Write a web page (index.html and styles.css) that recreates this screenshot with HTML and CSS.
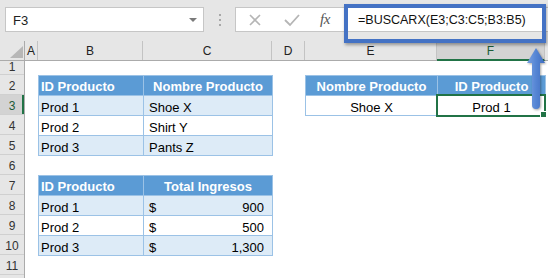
FILE: index.html
```html
<!DOCTYPE html>
<html>
<head>
<meta charset="utf-8">
<link rel="stylesheet" href="styles.css">
</head>
<body>
<div class="app">
  <div class="toolbar">
    <div class="namebox">
      <span class="nb-text">F3</span>
      <span class="caret"></span>
    </div>
    <div class="grip"><i></i><i></i><i></i></div>
    <div class="fbar">
      <span class="ico">
        <svg width="14" height="14" viewBox="0 0 14 14"><path d="M2 2 L12 12 M12 2 L2 12" stroke="#b5b5b5" stroke-width="1.6" fill="none"/></svg>
      </span>
      <span class="ico">
        <svg width="18" height="14" viewBox="0 0 18 14"><path d="M2 7 L7 12 L16 2" stroke="#b5b5b5" stroke-width="1.8" fill="none"/></svg>
      </span>
      <span class="fx">fx</span>
      <span class="formula">=BUSCARX(E3;C3:C5;B3:B5)</span>
    </div>
  </div>

  <div class="sheet">
    <div class="corner">
      <svg width="24" height="20" viewBox="0 0 24 20"><polygon points="23,5 23,17 10,17" fill="#b7b7b7"/></svg>
    </div>
    <div class="colheads">
      <div class="ch w-a">A</div>
      <div class="ch w-b">B</div>
      <div class="ch w-c">C</div>
      <div class="ch w-d">D</div>
      <div class="ch w-e">E</div>
      <div class="ch w-f sel">F</div>
      <div class="ch w-rest"></div>
    </div>
    <div class="rowheads">
      <div class="rh short">1</div>
      <div class="rh">2</div>
      <div class="rh sel">3</div>
      <div class="rh">4</div>
      <div class="rh">5</div>
      <div class="rh">6</div>
      <div class="rh">7</div>
      <div class="rh">8</div>
      <div class="rh">9</div>
      <div class="rh">10</div>
      <div class="rh">11</div>
      <div class="rh"></div>
    </div>
    <div class="body">
      <div class="tbl t1">
        <div class="c hd">ID Producto</div>
        <div class="c hd center">Nombre Producto</div>
        <div class="c band">Prod 1</div>
        <div class="c band ind">Shoe X</div>
        <div class="c">Prod 2</div>
        <div class="c ind">Shirt Y</div>
        <div class="c band">Prod 3</div>
        <div class="c band ind">Pants Z</div>
      </div>

      <div class="tbl t2">
        <div class="c hd">ID Producto</div>
        <div class="c hd center">Total Ingresos</div>
        <div class="c band">Prod 1</div>
        <div class="c band ind acct"><span>$</span><span>900</span></div>
        <div class="c">Prod 2</div>
        <div class="c ind acct"><span>$</span><span>500</span></div>
        <div class="c band">Prod 3</div>
        <div class="c band ind acct"><span>$</span><span>1,300</span></div>
      </div>

      <div class="tbl t3">
        <div class="c hd center">Nombre Producto</div>
        <div class="c hd center">ID Producto</div>
        <div class="c center">Shoe X</div>
        <div class="c center active">Prod 1</div>
      </div>
    </div>
  </div>

  <div class="highlight"></div>
  <svg class="arrow" width="24" height="66" viewBox="0 0 24 66">
    <defs>
      <linearGradient id="ag" x1="0" y1="0" x2="1" y2="0">
        <stop offset="0" stop-color="#7aa2e2"/>
        <stop offset="0.5" stop-color="#5585d4"/>
        <stop offset="1" stop-color="#3f6cc0"/>
      </linearGradient>
    </defs>
    <path d="M12 2 L21 17 L16 17 L16 59 Q16 63 12 63 Q8 63 8 59 L8 17 L3 17 Z" fill="url(#ag)"/>
  </svg>
</div>
</body>
</html>
```

FILE: styles.css
```css
* { box-sizing: border-box; }
html, body { margin: 0; padding: 0; }
body {
  width: 548px;
  height: 278px;
  overflow: hidden;
  background: #ffffff;
  font-family: "Liberation Sans", Arial, sans-serif;
  color: #000;
}
.app {
  position: relative;
  width: 548px;
  height: 278px;
  overflow: hidden;
}

/* toolbar */
.toolbar {
  height: 41px;
  background: #e6e6e6;
  display: flex;
  align-items: flex-start;
  padding-top: 7px;
  padding-left: 5px;
}
.namebox {
  width: 199px;
  height: 25px;
  background: #fff;
  border: 1px solid #c6c6c6;
  display: flex;
  align-items: center;
  justify-content: space-between;
  padding: 0 6px 0 7px;
}
.nb-text { font-size: 13px; color: #222; padding-top: 1px; }
.caret {
  width: 0; height: 0;
  border-left: 4px solid transparent;
  border-right: 4px solid transparent;
  border-top: 4px solid #7a7a7a;
}
.grip {
  width: 31px;
  height: 25px;
  display: flex;
  flex-direction: column;
  align-items: center;
  justify-content: center;
  gap: 3px;
}
.grip i { display: block; width: 2px; height: 2px; background: #a8a8a8; }
.fbar {
  flex: 1;
  height: 25px;
  background: #fff;
  border: 1px solid #c6c6c6;
  border-right: none;
  display: flex;
  align-items: center;
  padding-left: 12px;
}
.ico { display: flex; align-items: center; width: 35px; }
.ico svg { display: block; }
.fx {
  font-family: "Liberation Serif", "Times New Roman", serif;
  font-style: italic;
  font-size: 15px;
  color: #555;
  width: 40px;
  padding-left: 2px;
  letter-spacing: -0.5px;
}
.formula { font-size: 12.5px; color: #111; padding-left: 0; }

/* sheet */
.sheet {
  display: grid;
  grid-template-columns: 25px 1fr;
  grid-template-rows: 20px 1fr;
  height: 237px;
}
.corner {
  background: #e6e6e6;
  border-right: 1px solid #ababab;
  border-bottom: 1px solid #ababab;
}
.corner svg { display: block; }
.colheads {
  display: flex;
  background: #e6e6e6;
  border-bottom: 1px solid #ababab;
}
.ch {
  flex: none;
  border-right: 1px solid #c3c3c3;
  font-size: 12px;
  color: #222;
  text-align: center;
  line-height: 19px;
  padding-top: 1px;
}
.w-a { width: 13px; }
.w-b { width: 105px; }
.w-c { width: 129px; }
.w-d { width: 33px; }
.w-e { width: 132px; }
.w-f { width: 108px; }
.w-rest { flex: 1; border-right: none; }
.ch.sel {
  background: #d3d3d3;
  color: #1d5b37;
  border-bottom: 2px solid #217346;
  margin-bottom: -1px;
}
.rowheads {
  display: flex;
  flex-direction: column;
  background: #e6e6e6;
  border-right: 1px solid #ababab;
}
.rh {
  flex: none;
  height: 20px;
  border-bottom: 1px solid #d0d0d0;
  font-size: 12px;
  color: #333;
  text-align: center;
  line-height: 16px;
  padding-top: 3px;
}
.rh.short { height: 14px; padding-top: 0; line-height: 13px; }
.rh.sel {
  background: #d3d3d3;
  color: #1d5b37;
  box-shadow: inset -2px 0 0 #217346;
}

.body {
  display: grid;
  grid-template-columns: 13px 105px 129px 33px 132px 108px 1fr;
  grid-template-rows: 14px repeat(11, 20px) 1fr;
  background: #fff;
}

/* tables */
.tbl {
  display: grid;
  background: #9bc2e6;
  padding: 1px;
  gap: 1px;
  width: calc(100% + 1px);
  height: calc(100% + 1px);
  font-size: 13px;
}
.t1 { grid-column: 2 / 4; grid-row: 2 / 6; grid-template-columns: 104px 1fr; grid-template-rows: repeat(4, 1fr); }
.t2 { grid-column: 2 / 4; grid-row: 7 / 11; grid-template-columns: 104px 1fr; grid-template-rows: repeat(4, 1fr); }
.t3 { grid-column: 5 / 7; grid-row: 2 / 4; grid-template-columns: 131px 1fr; grid-template-rows: repeat(2, 1fr); }

.c {
  background: #fff;
  display: flex;
  align-items: flex-end;
  line-height: 15px;
  padding: 0 0 0 2px;
  white-space: nowrap;
}
.c.hd {
  background: #5b9bd5;
  color: #fff;
  font-weight: bold;
  padding-bottom: 1px;
}
.c.band { background: #ddebf7; }
.c.ind { padding-left: 5px; }
.c.center { justify-content: center; padding-left: 0; }
.c.acct { justify-content: space-between; padding-right: 8px; }
.c.active { position: relative; }
.c.active::after {
  content: "";
  position: absolute;
  left: -2px; top: -2px; right: -1px; bottom: -2px;
  border: 2px solid #217346;
}
.c.active::before {
  content: "";
  position: absolute;
  right: -2px; bottom: -3px;
  width: 5px; height: 5px;
  background: #217346;
  border: 1px solid #fff;
  z-index: 1;
}

/* overlays */
.highlight {
  position: absolute;
  left: 344px;
  top: 4px;
  width: 202px;
  height: 39px;
  border: 4px solid #4472c4;
  box-shadow: 1px 2px 3px rgba(0, 0, 0, 0.35);
}
.arrow {
  position: absolute;
  left: 524px;
  top: 46px;
  filter: drop-shadow(1px 1px 1px rgba(0, 0, 0, 0.35));
}
```
